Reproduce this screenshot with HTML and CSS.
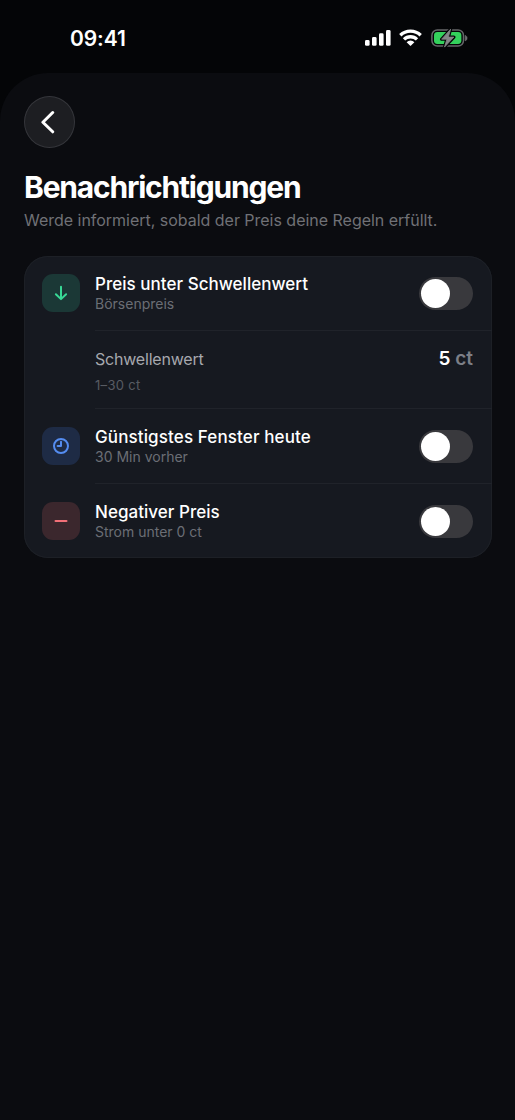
FILE: index.html
```html
<!DOCTYPE html>
<html lang="de">
<head>
<meta charset="utf-8">
<title>Benachrichtigungen</title>
<link rel="stylesheet" href="styles.css">
</head>
<body>
<header class="status">
  <time class="clock">09:41</time>
  <div class="indicators">
    <svg width="26" height="17" viewBox="0 0 26 17" fill="#fff"><rect x="0" y="11" width="4.6" height="5.8" rx="1.4"/><rect x="7" y="8" width="4.6" height="8.8" rx="1.4"/><rect x="14" y="4.3" width="4.6" height="12.5" rx="1.4"/><rect x="21" y="1" width="4.6" height="15.8" rx="1.4"/></svg>
    <svg class="wifi" width="23" height="17" viewBox="0 0 23 17" fill="none" stroke="#fff" stroke-width="3.3"><path d="M1.3 6.3a14.6 14.6 0 0 1 20.4 0"/><path d="M5 10.4a9.3 9.3 0 0 1 13 0"/><path d="M11.5 17 7.6 13.2a5.5 5.5 0 0 1 7.8 0z" fill="#fff" stroke="none"/></svg>
    <svg class="battery" width="37" height="20" viewBox="0 0 37 20"><rect x=".9" y="2" width="31.6" height="16" rx="5.4" fill="none" stroke="#66676a" stroke-width="1.5"/><rect x="3" y="4.1" width="27.4" height="11.8" rx="3.4" fill="#34d15c"/><path d="M34.2 7.4v5.4c2.5-.6 2.5-4.8 0-5.4z" fill="#707173" stroke="#707173" stroke-width=".6"/><path d="M19.6 1.2 10.6 11.2h5.3l-2.4 7.9 9.4-10h-5.5z" fill="#858688" stroke="#050608" stroke-width="3.2" stroke-linejoin="round"/><path d="M19.6 1.2 10.6 11.2h5.3l-2.4 7.9 9.4-10h-5.5z" fill="#858688" stroke="#858688" stroke-width=".8" stroke-linejoin="round"/></svg>
  </div>
</header>
<main class="sheet">
  <button class="back" aria-label="Zurück"><svg width="14" height="24" viewBox="0 0 14 24" fill="none" stroke="#fff" stroke-width="3" stroke-linecap="round" stroke-linejoin="round"><path d="M11.7 2.5 1.9 12.2l9.8 9.6"/></svg></button>
  <h1 class="title">Benachrichtigungen</h1>
  <p class="subtitle">Werde informiert, sobald der Preis deine Regeln erfüllt.</p>
  <section class="card">
    <div class="row">
      <span class="icon green"><svg width="18" height="18" viewBox="0 0 18 18"><path d="M9 2.8v12M3.9 10.2 9 15.1l5.1-4.9"/></svg></span>
      <div class="body"><div class="copy"><div class="label">Preis unter Schwellenwert</div><div class="hint">Börsenpreis</div></div><span class="switch" role="switch" aria-checked="false"></span></div>
    </div>
    <div class="row threshold">
      <div class="body"><div class="copy"><div class="name">Schwellenwert</div><div class="range">1–30 ct</div></div><div class="value">5 <span class="unit">ct</span></div></div>
    </div>
    <div class="row">
      <span class="icon blue"><svg width="18" height="18" viewBox="0 0 18 18"><circle cx="9" cy="9" r="7"/><path d="M9 4.8V9H5.6"/></svg></span>
      <div class="body"><div class="copy"><div class="label wide">Günstigstes Fenster heute</div><div class="hint">30 Min vorher</div></div><span class="switch" role="switch" aria-checked="false"></span></div>
    </div>
    <div class="row last">
      <span class="icon red"><svg width="18" height="18" viewBox="0 0 18 18"><path d="M3.5 9h11"/></svg></span>
      <div class="body"><div class="copy"><div class="label">Negativer Preis</div><div class="hint">Strom unter 0 ct</div></div><span class="switch" role="switch" aria-checked="false"></span></div>
    </div>
  </section>
</main>
</body>
</html>
```
FILE: styles.css
```css
* { box-sizing: border-box; }
body { margin: 0; height: 1120px; background: #040507; color: #fff; font-family: Inter, sans-serif; display: flex; flex-direction: column; overflow: hidden; }
svg { display: block; flex: none; }
.status { height: 73px; padding: 0 47px 0 70px; display: flex; justify-content: space-between; align-items: flex-start; flex: none; }
.clock { margin-top: 26px; font-size: 21px; line-height: 26px; font-weight: 600; letter-spacing: -.1px; }
.indicators { display: flex; margin-top: 29px; }
.wifi { margin-left: 8px; }
.battery { margin: -1px 0 0 9px; }
.sheet { flex: 1; padding: 23px 24px 0; background: #0b0c10; border-radius: 48px 48px 0 0; }
.back { width: 51px; height: 52px; padding: 0 4px 0 0; border: 1px solid #35363b; border-radius: 50%; background: #1d1e22; display: flex; align-items: center; justify-content: center; }
.title { margin: 21px 0 0; font-size: 30px; line-height: 36px; font-weight: 700; letter-spacing: -1.2px; white-space: nowrap; }
.subtitle { margin: 4px 0 0; font-size: 16px; line-height: 22px; color: #707176; letter-spacing: -.02px; white-space: nowrap; }
.card { width: 467.5px; height: 302px; margin-top: 25px; background: #161920; box-shadow: inset 0 0 0 1px #1d2026; border-radius: 24px; overflow: hidden; }
.row { height: 75px; padding-left: 18px; display: flex; align-items: center; }
.icon { width: 38px; height: 38px; margin: 0 15px 1px 0; border-radius: 11px; display: flex; align-items: center; justify-content: center; flex: none; }
.icon svg { fill: none; stroke: currentColor; stroke-width: 2; stroke-linecap: round; stroke-linejoin: round; }
.green { background: #1b3836; color: #38d996; }
.blue { background: #1e2b45; color: #548cf0; }
.red { background: #3b272d; color: #f27078; }
.body { flex: 1; height: 100%; padding-right: 18.5px; display: flex; align-items: center; justify-content: space-between; border-bottom: 1px solid #20232a; white-space: nowrap; }
.label { font-size: 17px; line-height: 21px; font-weight: 500; letter-spacing: .03px; }
.wide { letter-spacing: .12px; }
.hint { font-size: 14px; line-height: 18px; color: #6b6e75; letter-spacing: 0; }
.threshold { height: 78px; padding-left: 71px; }
.threshold .body { align-items: flex-start; padding-top: 17px; }
.name { font-size: 16px; line-height: 22px; color: #a6a8ae; letter-spacing: -.2px; }
.range { margin-top: 7px; font-size: 13px; line-height: 16px; color: #585b63; letter-spacing: .3px; }
.value { font-size: 19px; line-height: 22px; font-weight: 600; }
.unit { color: #7c7f87; }
.last { height: 75px; }
.last .body { height: 74px; align-self: flex-start; border: 0; }
.switch { width: 54px; height: 33px; padding: 2px; border-radius: 17px; background: #39393d; }
.switch::before { content: ""; display: block; width: 29px; height: 29px; border-radius: 50%; background: #fff; }
```
